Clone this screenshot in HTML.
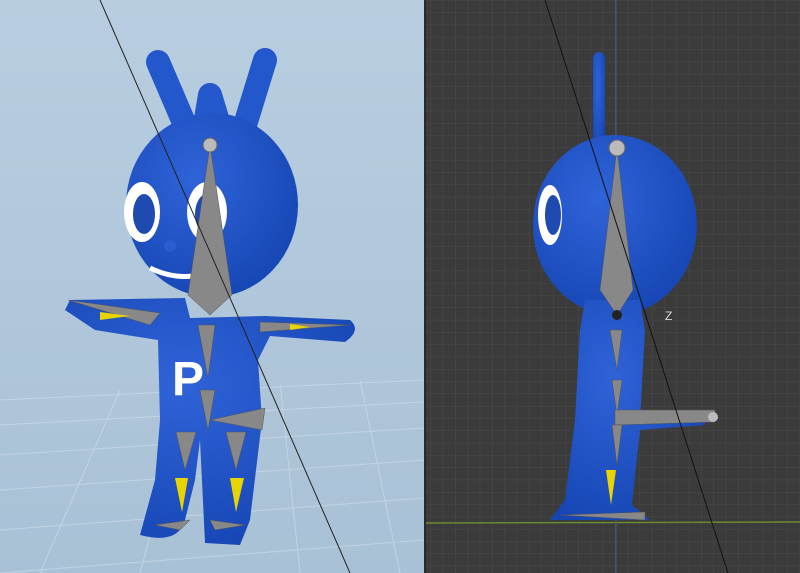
<!DOCTYPE html><html><head><style>body{margin:0;width:800px;height:573px;overflow:hidden}svg{display:block}</style></head><body>
<svg width="800" height="573" viewBox="0 0 800 573" xmlns="http://www.w3.org/2000/svg">
<defs>
<linearGradient id="bg" x1="0" y1="0" x2="0" y2="1"><stop offset="0" stop-color="#b8cde0"/><stop offset="1" stop-color="#a9c1d6"/></linearGradient>
<pattern id="g" width="12.3" height="12.3" patternUnits="userSpaceOnUse"><rect width="12.3" height="12.3" fill="#3b3b3b"/><path d="M0 0H12.3M0 0V12.3" stroke="#4a4a4a" stroke-width="1"/></pattern>
<radialGradient id="bl" cx="0.4" cy="0.35" r="0.7"><stop offset="0" stop-color="#2f63d8"/><stop offset="1" stop-color="#1646b4"/></radialGradient>
</defs>
<rect width="424" height="573" fill="url(#bg)"/>
<g stroke="#c9d8e6" stroke-width="1" opacity="0.8">
<path d="M0 400L424 380M0 425L424 402M0 455L424 428M0 490L424 460M0 530L424 498M0 573L424 540M40 573L120 390M140 573L190 385M300 573L280 383M400 573L360 380"/></g>
<rect x="426" y="0" width="374" height="573" fill="url(#g)"/>
<rect x="424" y="0" width="2" height="573" fill="#2a2a2a"/>
<line x1="426" y1="523" x2="800" y2="522" stroke="#6a8a30" stroke-width="1.5"/>
<line x1="616" y1="0" x2="616" y2="573" stroke="#4a5a8a" stroke-width="1"/>
<!-- left character -->
<g fill="url(#bl)">
<path d="M158 62L185 125Q195 135 205 125L210 95L220 128Q232 138 245 125L265 60" stroke="#2358cc" stroke-width="24" stroke-linecap="round" stroke-linejoin="round" fill="none"/>
<ellipse cx="212" cy="205" rx="86" ry="92"/>
<path d="M70 300L185 298L190 318L265 316L350 320Q362 330 345 342L270 336L258 360L262 420L250 520L240 545L205 543L200 440L195 480L185 520Q178 545 140 535L155 480L160 420L158 340L95 330L65 310Z"/>
</g>
<ellipse cx="142" cy="212" rx="18" ry="30" fill="#fff"/><ellipse cx="144" cy="214" rx="11" ry="20" fill="#1f4bb0"/>
<ellipse cx="207" cy="212" rx="20" ry="30" fill="#fff"/><ellipse cx="207" cy="214" rx="12" ry="20" fill="#1f4bb0"/>
<circle cx="170" cy="246" r="6" fill="#2a5bd0"/>
<path d="M150 268Q185 285 220 268" stroke="#fff" stroke-width="5" fill="none"/>
<text x="172" y="395" font-family="Liberation Sans" font-weight="bold" font-size="48" fill="#fff">P</text>
<g fill="#888" stroke="#555" stroke-width="0.5">
<path d="M210 145L232 295L210 315L188 295Z"/>
<path d="M198 325L215 325L208 378Z"/>
<path d="M200 390L215 390L208 430Z"/>
<path d="M210 420L265 408L262 430Z"/>
<path d="M176 432L196 432L185 470Z"/><path d="M226 432L246 432L236 470Z"/>
<path d="M68 300L160 313L150 325Z"/><path d="M260 322L350 325L260 332Z"/>
<path d="M155 525L190 520L180 530Z"/><path d="M210 520L245 525L215 530Z"/>
</g>
<path d="M100 312L130 316L100 320Z" fill="#e8d400"/><path d="M290 324L310 327L290 330Z" fill="#e8d400"/>
<path d="M175 478L188 478L182 512Z" fill="#e8d400"/><path d="M230 478L244 478L236 512Z" fill="#e8d400"/>
<circle cx="210" cy="145" r="7" fill="#bbb" stroke="#666"/>
<line x1="100" y1="0" x2="350" y2="573" stroke="#222" stroke-width="1"/>
<!-- right character -->
<g fill="url(#bl)">
<rect x="593" y="52" width="12" height="100" rx="6"/>
<ellipse cx="615" cy="225" rx="82" ry="90"/>
<path d="M585 300L640 300L645 330L640 420L705 410L705 425L640 430L632 505L650 520L550 520L565 500L575 420L580 330Z"/>
</g>
<ellipse cx="550" cy="215" rx="12" ry="30" fill="#fff"/><ellipse cx="553" cy="215" rx="8" ry="20" fill="#1f4bb0"/>
<g fill="#888" stroke="#555" stroke-width="0.5">
<path d="M617 148L633 290L617 315L600 290Z"/>
<path d="M610 330L622 330L617 370Z"/>
<path d="M612 380L622 380L617 415Z"/>
<path d="M615 410L715 410L715 422L615 425Z"/>
<path d="M612 425L622 425L617 465Z"/>
<path d="M560 515L645 512L645 520Z"/>
</g>
<path d="M606 470L616 470L611 505Z" fill="#e8d400"/>
<circle cx="617" cy="148" r="8" fill="#bbb" stroke="#666"/>
<circle cx="617" cy="315" r="5" fill="#222"/>
<circle cx="713" cy="417" r="5" fill="#bbb"/>
<text x="665" y="320" font-family="Liberation Sans" font-size="12" fill="#ddd">Z</text>
<line x1="545" y1="0" x2="728" y2="573" stroke="#111" stroke-width="1"/>
</svg>
</body></html>
